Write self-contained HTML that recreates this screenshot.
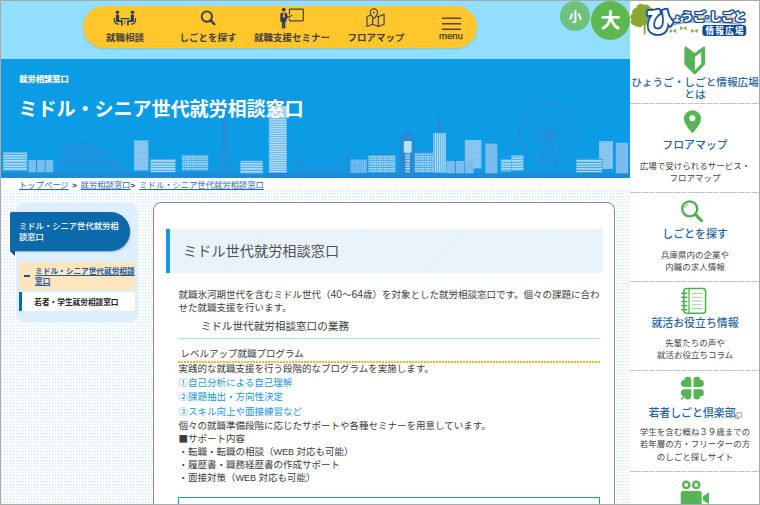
<!DOCTYPE html>
<html lang="ja">
<head>
<meta charset="utf-8">
<title>ミドル・シニア世代就労相談窓口</title>
<style>
*{box-sizing:border-box;margin:0;padding:0}
html,body{width:760px;height:505px;overflow:hidden}
body{position:relative;font-family:"Liberation Sans","Noto Sans CJK JP",sans-serif;color:#333;background:#fff;
  background-image:radial-gradient(circle at 1.750px 1.700px,#d3e8fb 0.500px,rgba(211,232,251,0) 1.050px);background-size:3px 3px;background-position:0 0}
.abs{position:absolute}
a{color:inherit}
#frame{position:absolute;left:0;top:0;width:760px;height:505px;border:1px solid #aaa;z-index:50;pointer-events:none}
#top{left:0;top:0;width:630px;height:60px;background:#92defe}
#pill{left:83px;top:6px;width:394px;height:42px;border-radius:21px;background:#ffc72c;box-shadow:0 1px 2px rgba(0,0,0,.12)}
.nv{position:absolute;top:0;height:42px;text-align:center;color:#45413a;font-weight:700;font-size:9.5px;white-space:nowrap}
.nv span{position:absolute;left:-40px;right:-40px;top:26px;line-height:12px}
#fs1{left:560.200px;top:1px;width:30px;height:29.700px;border-radius:50%;background:#6fc27d;color:#fff;font-size:13px;font-weight:700;text-align:center;line-height:31px}
#fs2{left:591px;top:1px;width:39px;height:39px;border-radius:50%;background:#5cb84f;color:#fff;font-size:20px;font-weight:700;text-align:center;line-height:41px}
#banner{left:0;top:59.200px;width:630px;height:118.500px;background:#0c9ce5;overflow:hidden}
#cat{left:19.300px;top:74.300px;color:#fff;font-size:8.250px;font-weight:900;line-height:12px;white-space:nowrap}
#ttl{left:18.600px;top:96px;color:#fff;font-size:19.100px;font-weight:700;line-height:28px;white-space:nowrap;letter-spacing:-.1px}
#bcbg{left:0;top:177.700px;width:630px;height:12.300px;background:#fff}
#bc{left:19px;top:179px;font-size:8.3px;line-height:12px;color:#2d69b0;white-space:nowrap}
#bc b{color:#333;font-size:8px;margin:0 1.5px 0 3.5px}
#bc a{text-decoration:underline}
#lnav{left:15.900px;top:203px;width:122.300px;height:119.200px;border-radius:8px;background:#ddeffd}
#lhead{left:10px;top:212.400px;width:119.500px;height:39px;background:#0b6aa9;border-radius:2px 20px 20px 0;color:#fff;font-size:8.300px;font-weight:500;line-height:10.800px;padding:8.500px 8px 0 9px;box-shadow:.5px 1px 1.500px rgba(0,40,80,.35)}
#lfold{left:10px;top:251.400px;width:0;height:0;border-top:5.500px solid #084e7e;border-left:5.400px solid transparent}
#li1{left:19.300px;top:262px;width:115.500px;height:27.700px;background:#fde5bd;font-size:7.660px;font-weight:700;line-height:9.300px;color:#2059a0;padding:5.300px 0 0 15.800px;text-decoration:underline}
#li1:before{content:"";position:absolute;left:4.800px;top:13px;width:6px;height:1.600px;background:#1d4f90}
#li2{left:19.300px;top:292.200px;width:115.500px;height:18.700px;background:#fff;border-left:3.800px solid #0b6aa9;font-size:7.660px;font-weight:700;line-height:10px;color:#222;padding:5.800px 0 0 12px;white-space:nowrap}
#main{left:153px;top:202px;width:462px;height:320px;background:#fff;border:1px solid #8a8a8a;border-radius:8px}
#h2{left:166px;top:229px;width:436.5px;height:43.5px;border-left:4px solid #1499e6;background:repeating-linear-gradient(135deg,#e3f0fb 0,#e3f0fb 1.4px,#eef6fd 1.4px,#eef6fd 2.8px);font-size:14.200px;line-height:44.500px;color:#505050;padding-left:13px;white-space:nowrap}
.t{position:absolute;font-size:9.500px;line-height:13px;color:#3c3c3c;white-space:nowrap}
.b{color:#1a96e8}
.t u{text-decoration:none;font-size:10.300px;line-height:1}
.t u.w{font-size:9.200px;letter-spacing:-.2px}
.t i{font-style:normal;font-family:"Noto Sans CJK JP",sans-serif}
#side{left:630px;top:0;width:130px;height:505px;background:#fff}
.sh{position:absolute;left:0;width:130px;text-align:center;color:#1f63a8;font-weight:500;font-size:10.900px;line-height:11.600px;white-space:nowrap}
.sd{position:absolute;left:0;width:130px;text-align:center;color:#444;font-size:8.500px;line-height:12.150px;white-space:nowrap}
.hr{position:absolute;left:0;width:130px;height:1px;background:repeating-linear-gradient(90deg,#c2c2c2 0,#c2c2c2 5px,#e8e8e8 5px,#e8e8e8 6.400px)}
</style>
</head>
<body>
<div id="top" class="abs"></div>
<div id="pill" class="abs">
  <div class="nv" style="left:42px;width:0"><span>就職相談</span></div>
  <div class="nv" style="left:125px;width:0"><span>しごとを探す</span></div>
  <div class="nv" style="left:209px;width:0"><span>就職支援セミナー</span></div>
  <div class="nv" style="left:293px;width:0"><span>フロアマップ</span></div>
  <div class="nv" style="left:368px;width:0"><span style="font-weight:400;font-size:9.500px;top:23.500px;color:#4a3a2c;-webkit-text-stroke:.25px #4a3a2c">menu</span></div>
</div>
<svg class="abs" style="left:83px;top:0" width="400" height="50" viewBox="83 0 400 50">
<g fill="#2e3b5e" stroke="none">
 <circle cx="117.400" cy="12.300" r="1.750"/><circle cx="132.500" cy="12.300" r="1.750"/>
 <path d="M115.9 15.6q0-1 1-1h1q1.3 0 1.3 1.2v4.4h2.6q1 0 1 1v4.3h-1.7v-3.6h-4q-1.2 0-1.2-1.2z"/>
 <path d="M134 15.6q0-1-1-1h-1q-1.3 0-1.3 1.2v4.4h-2.6q-1 0-1 1v4.3h1.7v-3.6h4q1.200 0 1.200-1.200z"/>
 <rect x="120.400" y="18.100" width="9.100" height="1.100" rx=".5"/>
 <rect x="124.300" y="20.300" width="1.300" height="3.800" opacity=".55"/>
</g>
<g fill="none" stroke="#2e3b5e" stroke-width="1.200" stroke-linecap="round">
 <path d="M114.300 18.300q-.4 5.300 4 5.900"/><path d="M135.600 18.300q.4 5.300-4 5.900"/>
</g>
<g fill="none" stroke="#2e3b5e" stroke-linecap="round">
 <circle cx="206.850" cy="16.600" r="5.150" stroke-width="1.800"/>
 <path d="M210.900 20.600l3.500 3.600" stroke-width="2.300"/>
</g>
<g fill="#2e3b5e">
 <circle cx="283.800" cy="9.600" r="1.900"/>
 <path d="M280.300 14.300q0-1.500 1.500-1.500h3.600q1.500 0 1.700 1.300l.6 2.600 4.800-2 .3.700-5.300 2.800q-.8.300-1-.5v4h-1.200v6q0 .8-.8.800h-1.800q-.8 0-.8-.8v-6h-1.600z"/><path d="M283.600 23v5" stroke="#ffc72c" stroke-width=".4" opacity=".6"/>
 <path d="M283.200 13.300h1.200l.4 3.400-1 1.200-1-1.200z" fill="#ffc72c"/>
</g>
<path d="M289.400 14.500v-4.600q0-.7.700-.7h12.500q.7 0 .7.700v10.200q0 .7-.7.700h-12.500q-.7 0-.7-.7v-1.600" fill="none" stroke="#3b4258" stroke-width="1.200"/>
<g fill="none" stroke="#3b4258" stroke-width="1.15" stroke-linejoin="round">
 <path d="M370.800 15l-3.800 1.500v10l5.600-2.200 5.700 2.200 5.800-2.200v-10l-5.800 2.400-1.600-.6"/>
 <path d="M372.600 18.500v5.800M378.300 16.700v9.800"/>
 <path d="M373.900 18.600q-3.600-3.600-3.600-6.100a3.600 3.600 0 0 1 7.200 0q0 2.500-3.600 6.100z"/>
</g>
<circle cx="373.900" cy="12.400" r=".9" fill="#2e3b5e"/>
<g stroke="#5b4635" stroke-width="1.500" stroke-linecap="round"><path d="M442.500 18.200h18M442.500 23.800h18M442.500 29.300h18"/></g>
</svg>
<div id="fs1" class="abs">小</div>
<div id="fs2" class="abs">大</div>
<div id="banner" class="abs"></div>
<svg class="abs" style="left:0;top:60px" width="630" height="118" viewBox="0 60 630 118">
<defs>
<pattern id="hs" width="4" height="2.67" patternUnits="userSpaceOnUse"><rect width="4" height="1.5" fill="#b9e0f8"/></pattern>
<pattern id="hf" width="4" height="1.700" patternUnits="userSpaceOnUse"><rect width="4" height=".9" fill="#b9e0f8" opacity=".4"/></pattern>
<pattern id="hg" width="4" height="1.800" patternUnits="userSpaceOnUse"><rect width="4" height="1.050" fill="#c4e4f9"/></pattern>
<pattern id="gr" width="2.400" height="2.400" patternUnits="userSpaceOnUse"><rect width="1.900" height="1.300" fill="#b9e0f8"/></pattern>
<pattern id="gr2" width="2.350" height="2.150" patternUnits="userSpaceOnUse"><path d="M0 .3h2.350M.3 0v2.150" stroke="#93ccf2" stroke-width=".6" fill="none"/></pattern>
<pattern id="vs" width="1.9" height="4" patternUnits="userSpaceOnUse"><rect width="1.1" height="4" fill="#b9e0f8"/></pattern>
<pattern id="dh" width="4" height="2.5" patternUnits="userSpaceOnUse"><rect width="4" height="1.1" fill="#2a89d3"/></pattern>
</defs>
<rect x="0" y="172.800" width="630" height="5" fill="#1f8bd7"/>
<clipPath id="dm"><path d="M53.700 172C57 165 60 157 63 151.600C68 145 76 142.700 83 142.700C92 142.700 99 147 105 151.600C112 157 118 161 121 163C125 166 128 170 130.500 172z"/></clipPath><rect x="53" y="142.900" width="78" height="30" fill="url(#dh)" clip-path="url(#dm)"/>
<rect x="2.8" y="152" width="24.6" height="19.0" fill="#3fa9ea"/><rect x="3.4" y="152.7" width="23.4" height="18.0" fill="url(#hs)"/>
<rect x="28.5" y="160" width="7.6" height="12.3" fill="#78bdec"/>
<rect x="37.1" y="160" width="7.6" height="12.3" fill="#78bdec"/>
<rect x="45.6" y="160" width="7.6" height="12.3" fill="#78bdec"/>
<rect x="134" y="140.4" width="14.4" height="30.1" fill="#78bdec"/><rect x="134.6" y="141.1" width="13.2" height="29.1" fill="url(#hf)"/>
<rect x="150" y="159" width="25.8" height="13.3" fill="#3fa9ea"/><rect x="150.6" y="159.7" width="24.6" height="12.3" fill="url(#hs)"/>
<rect x="181.7" y="154.7" width="26.7" height="15.8" fill="#3fa9ea"/><rect x="182.29999999999998" y="155.39999999999998" width="25.5" height="14.8" fill="url(#gr)"/>
<g fill="none" stroke="#2a89d3"><path d="M220.6 117.0h7.8M220.9 119.9h7.2M221.2 122.8h6.7M221.4 125.7h6.2M221.6 128.6h5.7M221.8 131.5h5.4M221.9 134.4h5.1M222.0 137.3h5.0M221.9 140.2h5.1M221.6 143.1h5.7M221.2 146.0h6.5M220.8 148.9h7.5M220.3 151.8h8.5M219.7 154.7h9.6M219.1 157.6h10.7M218.5 160.5h12.0M217.9 163.4h13.3M217.2 166.3h14.6M216.5 169.2h16.0M215.7 172.1h17.5" stroke-width=".8"/><path d="M220.6 117.0L221.1 122.5L221.6 128.1L221.9 133.6L222.0 139.1L221.4 144.7L220.6 150.2L219.5 155.7L218.3 161.2L217.1 166.8L215.7 172.3M228.4 117.0L227.9 122.5L227.4 128.1L227.1 133.6L227.0 139.1L227.6 144.7L228.4 150.2L229.5 155.7L230.7 161.2L231.9 166.8L233.3 172.3M222.7 117.0L223.0 122.5L223.2 128.1L223.3 133.6L223.4 139.1L223.1 144.7L222.7 150.2L222.3 155.7L221.7 161.2L221.2 166.8L220.5 172.3M226.3 117.0L226.0 122.5L225.8 128.1L225.7 133.6L225.6 139.1L225.9 144.7L226.3 150.2L226.7 155.7L227.3 161.2L227.8 166.8L228.5 172.3M224.500 114v58" stroke-width=".6"/></g>
<rect x="240" y="160.4" width="23.2" height="13.1" fill="#3fa9ea"/><rect x="240.6" y="161.1" width="22.0" height="12.1" fill="url(#hs)"/>
<rect x="268.600" y="106" width="18.400" height="67" fill="#49a9e9"/><rect x="269.200" y="117.600" width="17.200" height="55" fill="url(#hg)"/>
<rect x="268.600" y="106" width="18.400" height="11.500" fill="#a3d4f5"/><rect x="270" y="98" width="15.300" height="8" fill="#2a89d3"/>
<path d="M291.500 154Q305 166 322 165.500Q340 164 353 150.500V173H296z" fill="#2a89d3" opacity=".28"/><path d="M291.500 154Q305 166 322 165.500Q340 164 353 150.500M296 158v15M349 155v18" fill="none" stroke="#2a89d3" stroke-width=".8" opacity=".7"/><path d="M296 163.500Q310 170 322 169.500Q338 169 349 161" fill="none" stroke="#2a89d3" stroke-width=".6" opacity=".5"/>
<rect x="372" y="153.700" width="19.700" height="1.300" fill="#2a89d3"/><rect x="416" y="150.800" width="17" height="1.800" fill="#2a89d3" opacity=".7"/><rect x="350.500" y="159.700" width="16.500" height="13" fill="#4fa9e8"/><rect x="350.500" y="159.700" width="16.500" height="13" fill="url(#gr2)"/>
<rect x="368" y="155" width="27.8" height="17.6" fill="#3fa9ea"/><rect x="368.6" y="155.7" width="26.6" height="16.6" fill="url(#gr)"/>
<path d="M400 173.500V140q0-5 4-6.500h7.400q4 1.500 4 6.500v33.500z" fill="#2a89d3"/><path d="M403 132.200h9.400M407.700 130v3" stroke="#2a89d3" stroke-width="1" fill="none"/>
<rect x="403.800" y="141" width="7.800" height="11.600" fill="#b9e0f8"/><rect x="405.300" y="152.600" width="4.700" height="20" fill="url(#hs)"/>
<rect x="414.5" y="152.6" width="20.5" height="20.0" fill="#3fa9ea"/><rect x="415.1" y="153.29999999999998" width="19.3" height="19.0" fill="url(#gr)"/>
<path d="M438.300 132.600l.6-22.500h1l.6 22.500z" fill="#2a89d3"/><rect x="437.300" y="124" width="4.200" height="9" fill="#2a89d3"/>
<rect x="433" y="132.600" width="13" height="40" fill="#3fa9ea"/><rect x="433.500" y="133.200" width="12.400" height="39.400" fill="url(#vs)"/>
<rect x="464.8" y="140" width="16.7" height="28.4" fill="#78bdec"/><rect x="465.400" y="140.7" width="15.5" height="27.4" fill="url(#hf)"/>
<rect x="446.3" y="161" width="8.5" height="12.3" fill="#78bdec"/>
<rect x="455.8" y="161" width="8.5" height="12.3" fill="#78bdec"/>
<rect x="465.2" y="161" width="8.5" height="12.3" fill="#78bdec"/>
<rect x="485.300" y="143.600" width="12" height="29.700" fill="#78bdec"/>
<rect x="500.6" y="159" width="11.4" height="12.6" fill="#3fa9ea"/><rect x="501.20000000000005" y="159.7" width="10.2" height="11.6" fill="url(#hs)"/>
<rect x="511" y="155" width="12.8" height="16.0" fill="#3fa9ea"/><rect x="511.6" y="155.7" width="11.6" height="15.0" fill="url(#hs)"/>
<g fill="none" stroke="#2a89d3"><circle cx="549" cy="134.3" r="30.5" stroke-width="1.800" stroke-dasharray="1.400 1.261"/><path d="M549.0 134.3L579.5 134.3M549.0 134.3L579.2 138.3M549.0 134.3L578.5 142.2M549.0 134.3L577.2 146.0M549.0 134.3L575.4 149.6M549.0 134.3L573.2 152.9M549.0 134.3L570.6 155.9M549.0 134.3L567.6 158.5M549.0 134.3L564.2 160.7M549.0 134.3L560.7 162.5M549.0 134.3L556.9 163.8M549.0 134.3L553.0 164.5M549.0 134.3L549.0 164.8M549.0 134.3L545.0 164.5M549.0 134.3L541.1 163.8M549.0 134.3L537.3 162.5M549.0 134.3L533.8 160.7M549.0 134.3L530.4 158.5M549.0 134.3L527.4 155.9M549.0 134.3L524.8 152.9M549.0 134.3L522.6 149.6M549.0 134.3L520.8 146.0M549.0 134.3L519.5 142.2M549.0 134.3L518.8 138.3M549.0 134.3L518.5 134.3M549.0 134.3L518.8 130.3M549.0 134.3L519.5 126.4M549.0 134.3L520.8 122.6M549.0 134.3L522.6 119.1M549.0 134.3L524.8 115.7M549.0 134.3L527.4 112.7M549.0 134.3L530.4 110.1M549.0 134.3L533.8 107.9M549.0 134.3L537.3 106.1M549.0 134.3L541.1 104.8M549.0 134.3L545.0 104.1M549.0 134.3L549.0 103.8M549.0 134.3L553.0 104.1M549.0 134.3L556.9 104.8M549.0 134.3L560.7 106.1M549.0 134.3L564.2 107.9M549.0 134.3L567.6 110.1M549.0 134.3L570.6 112.7M549.0 134.3L573.2 115.7M549.0 134.3L575.4 119.0M549.0 134.3L577.2 122.6M549.0 134.3L578.5 126.4M549.0 134.3L579.2 130.3" stroke-width=".35"/><path d="M549 134.3L535.800 172.300M549 134.3L562 172.300M547.5 134.3L541 172.300M550.5 134.3L557 172.300M539.500 162h19M542 155h14" stroke-width=".7"/></g><circle cx="549" cy="134.3" r="2.500" fill="#2a89d3"/>
<rect x="599" y="141" width="14.0" height="28.0" fill="#78bdec"/><rect x="599.6" y="141.7" width="12.8" height="27.0" fill="url(#hf)"/>
<rect x="615.800" y="142.700" width="12.200" height="30.600" fill="#78bdec"/>
<rect x="575.8" y="158.5" width="26.7" height="14.1" fill="#2f9be2"/><rect x="576.4" y="159.2" width="25.5" height="13.1" fill="url(#hs)"/>
</svg>
<div id="cat" class="abs">就労相談窓口</div>
<div id="ttl" class="abs">ミドル・シニア世代就労相談窓口</div>
<div id="bcbg" class="abs"></div>
<div id="bc" class="abs"><a>トップページ</a><b>&gt;</b> <a>就労相談窓口</a><b style="margin:0 1.9px 0 0">&gt;</b> <a>ミドル・シニア世代就労相談窓口</a></div>
<div id="lnav" class="abs"></div>
<div id="lhead" class="abs">ミドル・シニア世代就労相談窓口</div>
<div id="lfold" class="abs"></div>
<div id="li1" class="abs">ミドル・シニア世代就労相談窓口</div>
<div id="li2" class="abs">若者・学生就労相談窓口</div>
<div id="main" class="abs"></div>
<div id="h2" class="abs">ミドル世代就労相談窓口</div>
<div class="t" style="left:178.500px;top:287.500px;width:424px;white-space:normal;font-size:9.500px">就職氷河期世代を含むミドル世代（<u>40</u>～<u>64</u>歳）を対象とした就労相談窓口です。個々の課題に合わせた就職支援を行います。</div>
<div class="t" style="left:200.700px;top:319.500px;font-size:10.600px">ミドル世代就労相談窓口の業務</div>
<div class="abs" style="left:178px;top:338.100px;width:422px;border-top:1.200px solid #a9dcf8"></div>
<div class="t" style="left:180.500px;top:347.300px">レベルアップ就職プログラム</div>
<div class="abs" style="left:178px;top:361.200px;width:422px;height:1.900px;background:repeating-linear-gradient(90deg,#f4b52c 0,#f4b52c 1.600px,transparent 1.600px,transparent 3px)"></div>
<div class="t" style="left:178.5px;top:361.900px">実践的な就職支援を行う段階的なプログラムを実施します。</div>
<div class="t b" style="left:178.5px;top:375.900px"><i>①</i>自己分析による自己理解</div>
<div class="t b" style="left:178.5px;top:390.200px"><i>②</i>課題抽出・方向性決定</div>
<div class="t b" style="left:178.5px;top:404.500px"><i>③</i>スキル向上や面接練習など</div>
<div class="t" style="left:178.5px;top:418.5px">個々の就職準備段階に応じたサポートや各種セミナーを用意しています。</div>
<div class="t" style="left:178.5px;top:431.5px"><i>■</i>サポート内容</div>
<div class="t" style="left:178.5px;top:444.5px">・転職・転職の相談（<u class="w">WEB</u> 対応も可能）</div>
<div class="t" style="left:178.5px;top:457.5px">・履歴書・職務経歴書の作成サポート</div>
<div class="t" style="left:178.5px;top:470.5px">・面接対策（<u class="w">WEB</u> 対応も可能）</div>
<div class="abs" style="left:178px;top:496.500px;width:422px;height:20px;border:1.600px solid #1a98e8"></div>
<div id="side" class="abs">
<svg class="abs" style="left:0;top:0" width="130" height="505" viewBox="630 0 130 505">
<!-- logo -->
<g>
 <path d="M644.600 34.500V24" stroke="#8aa32c" stroke-width="1.800" fill="none"/>
 <path d="M634 25a3.200 3.200 0 0 1-2.300-5.500a3.500 3.500 0 0 1 .8-6a4 4 0 0 1 3.700-5.500a4.500 4.500 0 0 1 7.500-3a4.500 4.500 0 0 1 6.500 2.500a3.800 3.800 0 0 1 3.500 5.500a3.500 3.500 0 0 1-.5 6a3.500 3.500 0 0 1-5.500 4.500q-2 2.500-5 1.500a3.500 3.500 0 0 1-5.500 1.500a3 3 0 0 1-3.200-1.500z" fill="#8ba72f"/>
 <path d="M668 20Q690 12 742 19" stroke="#f9b58c" stroke-width="2" fill="none" opacity=".85"/>
 <path d="M668 22Q690 14 742 21" stroke="#fbe88f" stroke-width="2.200" fill="none" opacity=".9"/>
 <path d="M669 24Q690 16.500 742 23" stroke="#a9d8f5" stroke-width="1.600" fill="none" opacity=".9"/>
 <path d="M670 25.600Q690 18.500 742 24.500" stroke="#9a8fdc" stroke-width="1.400" fill="none" opacity=".9"/>
 <g fill="#78ae3a"><path d="M672.800 31l-3.200-2.200v4.200zM672.800 31l3.200-2.200v4.200z"/><path d="M683.400 28.200l-3.200-2.200v4.200zM683.400 28.200l3.200-2.200v4.200z"/><path d="M694.500 31l-3.200-2.200v4.200zM694.500 31l3.200-2.200v4.200z"/></g>
 <g font-family="'Liberation Sans','Noto Sans CJK JP',sans-serif" font-weight="900" fill="#fff" stroke="#0d4a9c" stroke-linejoin="round" paint-order="stroke">
  <text x="645.500" y="31.800" font-size="28" stroke-width="3.600">ひ</text>
  <text x="672.700" y="21.300" font-size="8.500" stroke-width="2.500">ょ</text>
  <text x="681" y="21.300" font-size="10.800" stroke-width="2.600" textLength="65" lengthAdjust="spacingAndGlyphs">うご·しごと</text>
 </g>
 <rect x="702.400" y="24.900" width="43.800" height="11" rx="3" fill="#0d4a9c"/>
 <text x="705.400" y="33.600" font-family="'Liberation Sans','Noto Sans CJK JP',sans-serif" font-weight="700" font-size="8.600" fill="#fff" textLength="38.300" lengthAdjust="spacing">情報広場</text>
</g>
<!-- wakaba -->
<path d="M685.600 47.800L694.750 54.800L703.900 47.800V64L694.750 73.100L685.600 64z" fill="#56b553" stroke="#56b553" stroke-width="2.400" stroke-linejoin="round"/>
<path d="M694.900 57.100l6.300-5.200v11.900l-6.300 6.700z" fill="#fff"/>
<!-- pin -->
<path d="M692.450 133.300q-8.550-9.500-8.550-14.500a8.550 8.550 0 0 1 17.100 0q0 5-8.550 14.500z" fill="#56b553"/><circle cx="692.400" cy="118.300" r="3" fill="#fff"/>
<!-- magnifier -->
<g fill="none" stroke="#4cb04a" stroke-linecap="round"><circle cx="689.700" cy="208.800" r="7.500" stroke-width="2.200"/><path d="M695.800 214.900l5.800 5.800" stroke-width="3"/><path d="M685.200 207.500a4.600 4.600 0 0 1 3-3.200" stroke-width=".9"/></g>
<!-- notebook -->
<g fill="none" stroke="#4cb04a"><rect x="683.800" y="288.600" width="21.800" height="24.700" rx="3" stroke-width="1.500"/><path d="M689 288.600v24.700" stroke-width="1.200"/>
<path d="M682 293.300h4.600M682 297.400h4.600M682 301.500h4.600M682 305.600h4.600M682 309.700h4.600" stroke-width="1.700" stroke-linecap="round"/>
<path d="M691.600 293.500h10.800M691.600 297.300h10.800M691.600 301h10.800M691.600 304.800h10.800M691.600 308.500h10.800" stroke-width="1" opacity=".55"/></g>
<!-- clover -->
<g fill="#56b553"><path d="M691.300 387V380.100A3.450 3.450 0 0 0 684.400 380.100A3.450 3.450 0 0 0 684.400 387z"/><path d="M693.500 387V380.100A3.450 3.450 0 0 1 700.400 380.100A3.450 3.450 0 0 1 700.400 387z"/><path d="M691.300 389.200V396.100A3.450 3.450 0 0 1 684.400 396.100A3.450 3.450 0 0 1 684.400 389.200z"/><path d="M693.500 389.200V396.100A3.450 3.450 0 0 0 700.400 396.100A3.450 3.450 0 0 0 700.400 389.200z"/></g>
<path d="M684.500 396l-3 3" stroke="#56b553" stroke-width="1.400" fill="none" stroke-linecap="round"/>
<!-- ext link -->
<g fill="none" stroke="#777" stroke-width=".7"><rect x="737" y="412.800" width="4.300" height="4.300"/><path d="M735.400 414.600v4h4"/></g>
<!-- camera -->
<g fill="#56b553"><circle cx="686.300" cy="484.900" r="4.300"/><circle cx="696.200" cy="484.900" r="4.300"/><rect x="680.700" y="491" width="21" height="14" rx="2.500"/><path d="M702.800 496.500l6.200-4.200v12l-6.200-4z"/></g>
<circle cx="686.300" cy="484.900" r="1.900" fill="#fff"/><circle cx="696.200" cy="484.900" r="1.900" fill="#fff"/>
</svg>
  <div class="sh" style="top:77.400px;font-size:10.650px">ひょうご・しごと情報広場<br>とは</div>
  <div class="hr" style="top:103.200px"></div>
  <div class="sh" style="top:140.400px">フロアマップ</div>
  <div class="sd" style="top:159.800px">広場で受けられるサービス・<br>フロアマップ</div>
  <div class="hr" style="top:192px"></div>
  <div class="sh" style="top:229.400px">しごとを探す</div>
  <div class="sd" style="top:248.600px">兵庫県内の企業や<br>内職の求人情報</div>
  <div class="hr" style="top:281px"></div>
  <div class="sh" style="top:318.400px">就活お役立ち情報</div>
  <div class="sd" style="top:337.200px">先輩たちの声や<br>就活お役立ちコラム</div>
  <div class="hr" style="top:370px"></div>
  <div class="sh" style="top:407.500px;left:-3px">若者しごと倶楽部</div>
  <div class="sd" style="top:426.300px">学生を含む概ね３９歳までの<br>若年層の方・フリーターの方<br>のしごと探しサイト</div>
  <div class="hr" style="top:470.500px"></div>
</div>
<div id="frame"></div>
</body>
</html>
